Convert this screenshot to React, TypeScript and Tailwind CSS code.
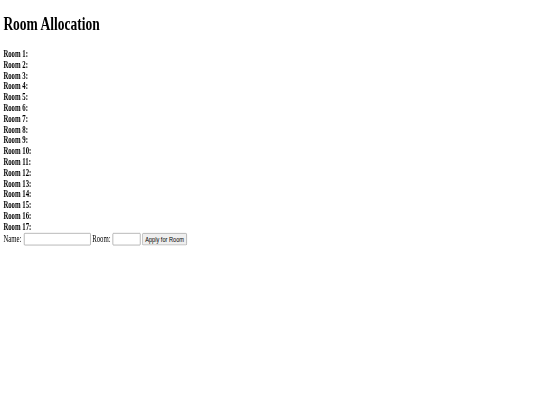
const rooms = Array.from({ length: 17 }, (_, i) => i + 1)

// The reference is a plain default-styled page shot at 1280 wide and squeezed into 540x405,
// so we lay the page out at its natural size and scale the whole sheet down.
export default function App() {
  return (
    <div className="w-[540px] h-[405px] overflow-hidden bg-white">
      <div
        className="w-[1280px] h-[690px] origin-top-left scale-x-[0.421875] scale-y-[0.587] p-[8px] text-black text-[16px] leading-[1.15]"
        style={{ fontFamily: '"Liberation Serif", "Times New Roman", serif' }}
      >
        <h1 className="text-[32px] font-bold mt-[14px] mb-[24.5px]">Room Allocation</h1>

        <div>
          {rooms.map((n) => (
            <div key={n}>
              <strong className="font-bold">Room {n}:</strong>
            </div>
          ))}
        </div>

        <form className="flex items-center mt-[1px]" onSubmit={(e) => e.preventDefault()}>
          <label className="mr-[6px]">Name:</label>
          <input
            type="text"
            className="w-[158px] h-[21px] border border-[#767676] rounded-[2px] px-[2px] mr-[4px] text-[13.33px]"
          />
          <label className="mr-[5px]">Room:</label>
          <input
            type="text"
            className="w-[66px] h-[21px] border border-[#767676] rounded-[2px] px-[2px] mr-[4px] text-[13.33px]"
          />
          <button
            type="submit"
            className="h-[21px] px-[6px] bg-[#efefef] border border-[#767676] rounded-[3px] text-[13.33px]"
            style={{ fontFamily: '"Liberation Sans", Arial, sans-serif' }}
          >
            Apply for Room
          </button>
        </form>
      </div>
    </div>
  )
}
